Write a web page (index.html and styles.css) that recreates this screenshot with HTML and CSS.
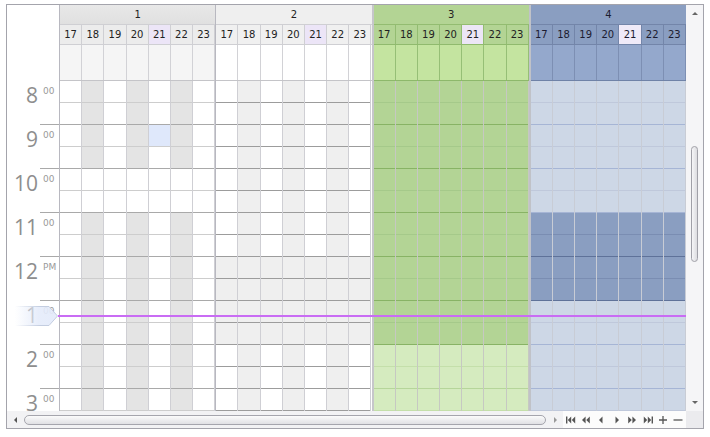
FILE: index.html
```html
<!DOCTYPE html>
<html lang="en">
<head>
	<meta charset="UTF-8">
	<title>Scheduler</title>
	<link rel="stylesheet" href="styles.css">
</head>
<body>
	<div class="scheduler">
		<div class="top">
			<div class="view" id="view">
				<div class="ruler">
					<div class="ruler-head"></div>
					<div class="ruler-body" id="ruler"></div>
				</div>
				<div class="now-line"></div>
				<svg class="now-mark" width="44" height="20" viewBox="0 0 44 20">
					<defs>
						<linearGradient id="nm" x1="0" x2="1" y1="0" y2="0">
							<stop offset="0" stop-color="#e4ebfa" stop-opacity="0"/>
							<stop offset="0.55" stop-color="#e4ebfa" stop-opacity="0.88"/>
							<stop offset="1" stop-color="#e4ebfa" stop-opacity="0.95"/>
						</linearGradient>
						<linearGradient id="ns" x1="0" x2="1" y1="0" y2="0">
							<stop offset="0" stop-color="#c3cde0" stop-opacity="0"/>
							<stop offset="0.6" stop-color="#c3cde0" stop-opacity="1"/>
						</linearGradient>
					</defs>
					<polygon points="0,0.5 34,0.5 42.5,10 34,19.5 0,19.5" fill="url(#nm)" stroke="url(#ns)" stroke-width="1"/>
				</svg>
			</div>
			<div class="vscroll">
				<span class="varr"><i class="tri-up"></i></span>
				<div class="vtrack"><div class="vthumb"></div></div>
				<span class="varr"><i class="tri-down"></i></span>
			</div>
		</div>
		<div class="hscroll">
			<span class="harr"><i class="tri-left"></i></span>
			<div class="htrack"><div class="hthumb"></div></div>
			<span class="harr"><i class="tri-right"></i></span>
			<div class="nav">
				<span><svg width="10" height="8" viewBox="0 0 10 8"><rect x="0" y="0.5" width="1.4" height="7"/><path d="M5.2 0.5L1.8 4L5.2 7.5Z M9.2 0.5L5.8 4L9.2 7.5Z"/></svg></span>
				<span><svg width="10" height="8" viewBox="0 0 10 8"><path d="M4.6 0.5L1 4L4.6 7.5Z M8.8 0.5L5.2 4L8.8 7.5Z"/></svg></span>
				<span><svg width="10" height="8" viewBox="0 0 10 8"><path d="M6.5 0.5L3 4L6.5 7.5Z"/></svg></span>
				<span><svg width="10" height="8" viewBox="0 0 10 8"><path d="M3.5 0.5L7 4L3.5 7.5Z"/></svg></span>
				<span><svg width="10" height="8" viewBox="0 0 10 8"><path d="M1.2 0.5L4.8 4L1.2 7.5Z M5.4 0.5L9 4L5.4 7.5Z"/></svg></span>
				<span><svg width="10" height="8" viewBox="0 0 10 8"><path d="M0.8 0.5L4.2 4L0.8 7.5Z M4.8 0.5L8.2 4L4.8 7.5Z"/><rect x="8.6" y="0.5" width="1.4" height="7"/></svg></span>
				<span><svg width="10" height="10" viewBox="0 0 10 10"><path d="M1 5H9M5 1V9" stroke="#555" stroke-width="1.3" fill="none"/></svg></span>
				<span><svg width="10" height="10" viewBox="0 0 10 10"><path d="M0.5 5H9.5" stroke="#555" stroke-width="1.3" fill="none"/></svg></span>
			</div>
			<div class="corner"></div>
		</div>
	</div>
	<script type="text/javascript">
	var days = [17,18,19,20,21,22,23];
	var hours = [['8','00'],['9','00'],['10','00'],['11','00'],['12','PM'],['1','00'],['2','00'],['3','00']];
	var groups = [
		{name:'1', cls:'g1', state:function(c,h,s){
			if(c==4 && s==2){ return 'sel'; }
			return (c%2==1 && h!=10) ? 'alt' : '';
		}},
		{name:'2', cls:'g2', state:function(c,h){
			return (c%2==1 || (h>=12 && h<14)) ? 'alt' : '';
		}},
		{name:'3', cls:'g3', state:function(c,h){
			return h<14 ? 'work' : '';
		}},
		{name:'4', cls:'g4', state:function(c,h){
			return (h>=11 && h<13) ? 'work' : '';
		}}
	];

	function el(tag,cls,text){
		var e = document.createElement(tag);
		if(cls){ e.className = cls; }
		if(text){ e.textContent = text; }
		return e;
	}

	function buildRuler(){
		var ruler = document.getElementById('ruler');
		for(var i=0;i<hours.length;i++){
			var h = el('div','hour');
			h.appendChild(el('span','num',hours[i][0]));
			h.appendChild(el('span','min',hours[i][1]));
			ruler.appendChild(h);
		}
	}

	function buildGroup(g){
		var box = el('div','group '+g.cls);
		box.appendChild(el('div','gname',g.name));
		var head = el('div','days');
		var all = el('div','allday');
		var slots = el('div','slots');
		for(var c=0;c<days.length;c++){
			head.appendChild(el('span', days[c]==21 ? 'day today' : 'day', String(days[c])));
			all.appendChild(el('span','ad'));
			var col = el('div','col');
			for(var s=0;s<15;s++){
				var hr = 8 + Math.floor(s/2);
				var cls = 'cell';
				if(s%2==1){ cls += ' hr'; }
				var st = g.state(c,hr,s);
				if(st){ cls += ' '+st; }
				col.appendChild(el('span',cls));
			}
			slots.appendChild(col);
		}
		box.appendChild(head);
		box.appendChild(all);
		box.appendChild(slots);
		return box;
	}

	window.onload = function(){
		var view = document.getElementById('view');
		buildRuler();
		for(var i=0;i<groups.length;i++){
			view.appendChild(buildGroup(groups[i]));
		}
	}
	</script>
</body>
</html>
```

FILE: styles.css
```css
*{margin:0;padding:0;box-sizing:border-box;}
body { margin:4px 6px; font-family:"DejaVu Sans", Verdana, sans-serif; font-size:10px; color:#222; background:#fff; }
.scheduler { width:698px; height:425px; border:1px solid #a4a4ac; box-shadow:1px 1px 3px rgba(0,0,0,.18); display:flex; flex-direction:column; background:#fff; }
.top { display:flex; height:406px; }
.view { flex:1; display:flex; position:relative; overflow:hidden; min-width:0; }

/* time ruler */
.ruler { width:52px; flex:none; display:flex; flex-direction:column; }
.ruler-head { height:76px; }
.ruler-body { height:330px; overflow:hidden; }
.hour { height:44px; display:flex; }
.hour .num { width:33px; text-align:right; padding:1px 2px 0 0; font:21px/26px "Open Sans", "Liberation Sans", sans-serif; color:#8e8e8e; }
.hour .min { flex:1; border-bottom:1px solid #a9a9a9; padding:5px 0 0 3px; font-size:9px; line-height:11px; color:#9a9a9a; }

/* groups */
.group { flex:1 1 0; display:flex; flex-direction:column; border-left:1px solid #b8b8c0; min-width:0; }
.gname { height:20px; flex:none; border-bottom:1px solid #cfcfd3; display:flex; align-items:center; justify-content:center; }
.days { height:20px; flex:none; display:flex; border-bottom:1px solid #cfcfd3; }
.day { flex:1 1 0; border-right:1px solid #cfcfd3; display:flex; align-items:center; justify-content:center; }
.allday { height:36px; flex:none; display:flex; border-bottom:1px solid #c4c4c8; }
.ad { flex:1 1 0; border-right:1px solid #d2d2d6; }
.slots { flex:1; display:flex; }
.col { flex:1 1 0; display:flex; flex-direction:column; border-right:1px solid #cfcfd4; }
.cell { height:22px; flex:none; border-bottom:1px solid #cdcdcd; background:#fff; }
.day.today { background:#ece5f7; }

.g1 .gname { background:linear-gradient(#e8e8e8,#e0e0e0); }
.g1 .days { background:#ececec; }
.g1 .allday { background:#f5f5f5; }
.g1 .cell.hr { border-bottom-color:#a9a9a9; }
.g1 .cell.alt { background:#e4e4e4; }
.g1 .cell.sel { background:#dfe8fb; }

.g2 .gname { background:#efefef; }
.g2 .days { background:#f0f0f0; }
.g2 .cell { border-bottom-color:#9c9c9c; }
.g2 .cell.alt { background:#efefef; }

.g3 { border-left:2px solid #c6c6ca; }
.g3 .gname { background:#b3d494; border-bottom-color:#93bc71; }
.g3 .days { background:#b3d494; border-bottom-color:#90ba6e; }
.g3 .day { border-right-color:#93bc72; }
.g3 .day.today { background:#ece6f6; }
.g3 .allday { background:#c4e4a0; border-bottom-color:#8db86b; }
.g3 .ad { border-right-color:#96bf76; }
.g3 .col { border-right-color:#c6c8c2; }
.g3 .cell { background:#d5ebbf; border-bottom-color:#c4dfaa; }
.g3 .cell.hr { border-bottom-color:#b6d59a; }
.g3 .cell.work { background:#b3d495; border-bottom-color:#a5c98a; }
.g3 .cell.work.hr { border-bottom-color:#88b365; }

.g4 { border-left:2px solid #c0c2c8; }
.g4 .gname { background:#8a9ec1; border-bottom-color:#7385a9; color:#1c1c30; }
.g4 .days { background:#8a9ec1; border-bottom-color:#7385a9; color:#1c1c30; }
.g4 .day { border-right-color:#7385a9; }
.g4 .day.today { background:#efeaf8; }
.g4 .allday { background:#94a8cc; border-bottom-color:#6f82a7; }
.g4 .ad { border-right-color:#7d8fb3; }
.g4 .col { border-right-color:#c8ccd5; }
.g4 .cell { background:#cdd7e6; border-bottom-color:#bfc8db; }
.g4 .cell.hr { border-bottom-color:#a6b5d5; }
.g4 .cell.work { background:#8a9ec1; border-bottom-color:#7a8db2; }
.g4 .cell.work.hr { border-bottom-color:#5f7299; }

/* current time */
.now-line { position:absolute; left:51px; right:0; top:310px; height:2px; background:#c96cf4; }
.now-mark { position:absolute; left:8px; top:301px; }

/* scroll bars */
.vscroll { width:17px; flex:none; background:#f5f5f7; display:flex; flex-direction:column; }
.varr { height:17px; display:flex; align-items:center; justify-content:center; }
.vtrack { flex:1; display:flex; justify-content:center; }
.vthumb { margin-top:124px; width:7px; height:116px; border:1px solid #a0a0a8; border-radius:4px; background:linear-gradient(to right,#f6f6f8,#dcdce0); }
.tri-up { width:0; height:0; border-left:3px solid transparent; border-right:3px solid transparent; border-bottom:3px solid #666; }
.tri-down { width:0; height:0; border-left:3px solid transparent; border-right:3px solid transparent; border-top:3px solid #666; }
.tri-left { width:0; height:0; border-top:3px solid transparent; border-bottom:3px solid transparent; border-right:3px solid #555; }
.tri-right { width:0; height:0; border-top:3px solid transparent; border-bottom:3px solid transparent; border-left:3px solid #999; }

.hscroll { height:17px; flex:none; display:flex; background:#f2f2f4; }
.harr { width:16px; display:flex; align-items:center; justify-content:center; }
.htrack { flex:1; display:flex; align-items:center; padding:0 1px; }
.hthumb { flex:1; height:10px; border:1px solid #a5a5ad; border-radius:5px; background:linear-gradient(#fbfbfb,#e0e0e4); }
.nav { width:123px; display:flex; background:#fcfcfc; }
.nav span { flex:1; display:flex; align-items:center; justify-content:center; fill:#555; }
.corner { width:17px; background:#ebebee; }
```
